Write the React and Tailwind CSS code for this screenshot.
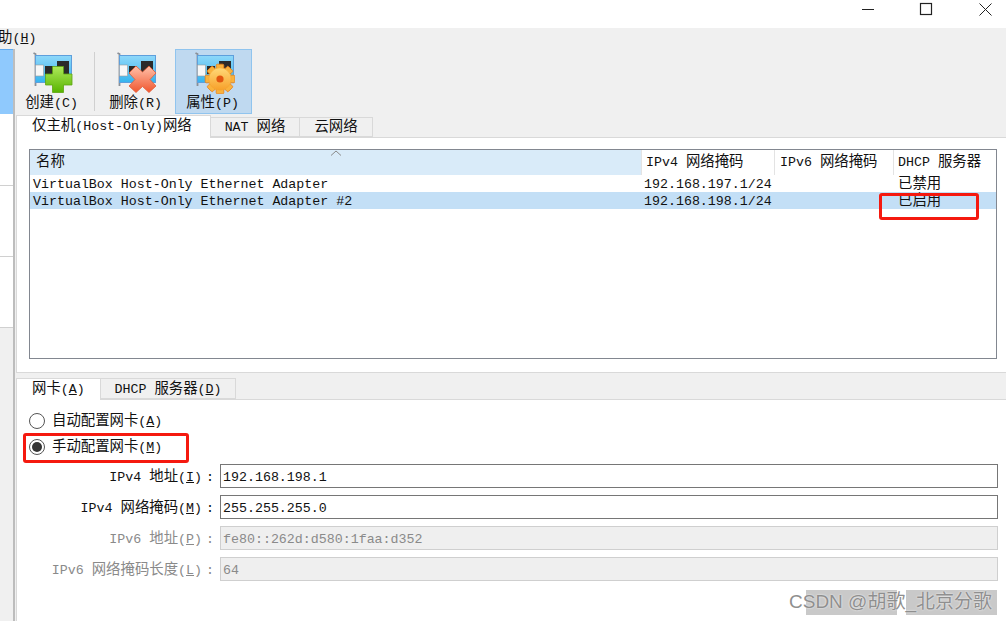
const T = ({ children }) =>
  children.split(/([\u4e00-\u9fff]+)/).map((part, i) =>
    /[\u4e00-\u9fff]/.test(part) ? (
      <span key={i} className="text-[14.4px]">{part}</span>
    ) : (
      part
    )
  );

const Card = ({ id }) => (
  <>
    <defs>
      <linearGradient id={id} x1="0" y1="0" x2="0" y2="1">
        <stop offset="0" stopColor="#8fd8fa" />
        <stop offset="1" stopColor="#35b4ee" />
      </linearGradient>
    </defs>
    <path d="M0.5 1 L2.5 2 V34" fill="none" stroke="#8a8f96" strokeWidth="1.8" />
    <rect x="2.5" y="3.5" width="36" height="27" fill={`url(#${id})`} stroke="#5e9fdc" strokeWidth="1" />
    <rect x="2.5" y="13" width="8" height="11" fill="#f7f7f7" stroke="#9a9a9a" strokeWidth="0.6" />
    <rect x="12" y="14" width="8" height="8" fill="#2b2b2b" />
    <rect x="24" y="9" width="12" height="13" fill="#2b2b2b" />
  </>
);

const PlusIcon = () => (
  <svg width="40" height="42" viewBox="0 0 40 42" className="block">
    <Card id="cardA" />
    <defs>
      <linearGradient id="plusG" x1="0" y1="0" x2="0" y2="1">
        <stop offset="0" stopColor="#aee95a" />
        <stop offset="1" stopColor="#58b400" />
      </linearGradient>
    </defs>
    <path d="M19.5 14.5 H30.5 V22 H39 V33 H30.5 V40.5 H19.5 V33 H12.5 V22 H19.5 Z" fill="url(#plusG)" stroke="#5ea512" strokeWidth="0.8" />
  </svg>
);

const CrossIcon = () => (
  <svg width="40" height="42" viewBox="0 0 40 42" className="block">
    <Card id="cardB" />
    <defs>
      <linearGradient id="crossG" x1="0" y1="0" x2="0" y2="1">
        <stop offset="0" stopColor="#ffc2ab" />
        <stop offset="1" stopColor="#f0562e" />
      </linearGradient>
    </defs>
    <path d="M19 14 L25.5 20 L32 14 L39 21 L33 27.5 L39 34 L32 40.5 L25.5 34.5 L19 40.5 L12 34 L18 27.5 L12 21 Z" fill="url(#crossG)" stroke="#e25a33" strokeWidth="0.8" />
  </svg>
);

const GearIcon = () => {
  const teeth = [0, 45, 90, 135, 180, 225, 270, 315];
  return (
    <svg width="40" height="42" viewBox="0 0 40 42" className="block">
      <Card id="cardC" />
      <defs>
        <linearGradient id="gearG" x1="0" y1="0" x2="0" y2="1">
          <stop offset="0" stopColor="#ffd978" />
          <stop offset="1" stopColor="#f7a02a" />
        </linearGradient>
      </defs>
      <g transform="translate(25 27)">
        {teeth.map((a) => (
          <rect key={a} x="-3.8" y="-14.8" width="7.6" height="8" rx="1.2" fill="#f9b23c" stroke="#e8801c" strokeWidth="0.8" transform={`rotate(${a})`} />
        ))}
        <circle r="11.2" fill="url(#gearG)" stroke="#f3a42f" strokeWidth="0.6" />
        <circle r="3.6" fill="#e2570f" />
      </g>
    </svg>
  );
};

const Tool = ({ icon, label, k, active }) => (
  <div className={`w-[77px] h-[65px] flex flex-col items-center ${active ? "bg-[#bfd9f0] border border-[#90c4ee]" : ""}`}>
    <div className={active ? "mt-[2px] ml-[3px]" : "mt-[3px]"}>{icon}</div>
    <div className="h-[19px] leading-[19px] -ml-[2px] whitespace-nowrap">
      <T>{label}</T>({k})
    </div>
  </div>
);

const Row = ({ label, k, value, disabled }) => (
  <div className="flex items-center gap-[6px] h-[24px]">
    <div className={`w-[197px] text-right whitespace-pre pt-[4px] ${disabled ? "text-[#8a8a8a]" : ""}`}>
      <T>{label}</T>(<u>{k}</u>)<span className="pl-[4px]">:</span>
    </div>
    <div className={`w-[778px] h-[24px] border pl-[2px] leading-[26px] ${disabled ? "border-[#cfcfcf] bg-[#efefef] text-[#8a8a8a]" : "border-[#767676] bg-white"}`}>
      {value}
    </div>
  </div>
);

const Radio = ({ checked, label, k }) => (
  <div className="flex items-center h-[26px] pl-[12px]">
    <div className="w-[16px] h-[16px] rounded-full border border-[#555] bg-white flex items-center justify-center">
      {checked && <div className="w-[10px] h-[10px] rounded-full bg-[#333]" />}
    </div>
    <span className="ml-[7px] pt-[2px] whitespace-nowrap">
      <T>{label}</T>(<u>{k}</u>)
    </span>
  </div>
);

const Cell = ({ w, className = "", children }) => (
  <div className={`shrink-0 whitespace-pre ${w} ${className}`}>{children}</div>
);

export default function App() {
  return (
    <div
      className="relative w-[1006px] h-[621px] overflow-hidden flex flex-col bg-[#f0f0f0] text-[13.3px] text-[#111]"
      style={{ fontFamily: '"Liberation Mono","Noto Sans CJK SC",monospace' }}
    >
      {/* title bar */}
      <div className="h-[28px] bg-white flex shrink-0 justify-end">
        <svg width="150" height="28" viewBox="0 0 150 28" className="block">
          <path d="M6 9.5 H18" stroke="#222" strokeWidth="1" />
          <rect x="64.5" y="3.5" width="11" height="11" fill="none" stroke="#222" strokeWidth="1.2" />
          <path d="M123.5 3.5 L135.5 15.5 M135.5 3.5 L123.5 15.5" stroke="#222" strokeWidth="1" />
        </svg>
      </div>
      {/* menu */}
      <div className="h-[21px] shrink-0 leading-[20px] -ml-[2px]">
        <T>助</T>(<u>H</u>)
      </div>

      <div className="flex flex-1 min-h-0">
        {/* left tree */}
        <div className="w-[15px] shrink-0 border-r-2 border-[#bdbdbd] flex flex-col">
          <div className="h-[65px] bg-[#8fc9fd] border-t border-[#5ea9ef]" />
          <div className="h-[72px] bg-white border-b border-[#d0d0d0]" />
          <div className="h-[71px] bg-white border-b border-[#d0d0d0]" />
          <div className="h-[71px] bg-white border-b border-[#d0d0d0]" />
        </div>

        <div className="flex-1 min-w-0 flex flex-col -ml-[2px]">
          {/* toolbar */}
          <div className="h-[65px] shrink-0 flex ml-[1px]">
            <Tool icon={<PlusIcon />} label="创建" k="C" />
            <div className="w-px h-[59px] mt-[3px] mx-[3px] bg-[#d0d0d0]" />
            <Tool icon={<CrossIcon />} label="删除" k="R" />
            <Tool icon={<GearIcon />} label="属性" k="P" active />
          </div>

          {/* top tabs */}
          <div className="h-[23px] shrink-0 flex items-end pl-[3px]">
            <div className="w-[195px] h-[23px] bg-white border border-b-0 border-[#d9d9d9] pl-[15px] leading-[21px] whitespace-nowrap relative z-10 -mb-px">
              <T>仅主机</T>(Host-Only)<T>网络</T>
            </div>
            <div className="w-[89px] h-[20px] border border-l-0 border-[#d9d9d9] text-center leading-[19px] whitespace-pre">NAT <T>网络</T></div>
            <div className="w-[73px] h-[20px] border border-l-0 border-[#d9d9d9] text-center leading-[19px]"><T>云网络</T></div>
          </div>

          {/* top panel */}
          <div className="h-[236px] shrink-0 ml-[3px] bg-white border-y border-l border-[#d9d9d9] pt-[11px] pl-[12px]">
            <div className="w-[968px] h-[210px] border border-[#828790]">
              <div className="flex h-[25px] leading-[24px]">
                <Cell w="w-[611px]" className="bg-[#d9ebf9] pl-[6px] relative">
                  <T>名称</T>
                  <svg width="12" height="6" viewBox="0 0 12 6" className="absolute left-[300px] top-0">
                    <path d="M1 5.5 L6 1 L11 5.5" fill="none" stroke="#8a8a8a" />
                  </svg>
                </Cell>
                <Cell w="w-[133px]" className="border-l border-[#e3e3e3] pl-[4px]">IPv4 <T>网络掩码</T></Cell>
                <Cell w="w-[119px]" className="border-l border-[#e3e3e3] pl-[5px]">IPv6 <T>网络掩码</T></Cell>
                <Cell w="flex-1" className="border-l border-[#e3e3e3] pl-[4px]">DHCP <T>服务器</T></Cell>
              </div>
              <div className="flex h-[17px] leading-[19px]">
                <Cell w="w-[611px]" className="pl-[3px]">VirtualBox Host-Only Ethernet Adapter</Cell>
                <Cell w="w-[252px]" className="pl-[3px]">192.168.197.1/24</Cell>
                <Cell w="flex-1" className="pl-[5px]"><T>已禁用</T></Cell>
              </div>
              <div className="flex h-[17px] leading-[19px] bg-[#c3dff6]">
                <Cell w="w-[611px]" className="pl-[3px]">VirtualBox Host-Only Ethernet Adapter #2</Cell>
                <Cell w="w-[252px]" className="pl-[3px]">192.168.198.1/24</Cell>
                <Cell w="flex-1" className="pl-[5px]"><T>已启用</T></Cell>
              </div>
            </div>
          </div>

          {/* bottom tabs */}
          <div className="h-[22px] mt-[4px] shrink-0 flex items-end pl-[3px]">
            <div className="w-[85px] h-[22px] bg-white border border-b-0 border-[#d9d9d9] pl-[15px] leading-[20px] relative z-10 -mb-px">
              <T>网卡</T>(<u>A</u>)
            </div>
            <div className="w-[135px] h-[21px] border border-l-0 border-[#d9d9d9] text-center leading-[21px] whitespace-pre">
              DHCP <T>服务器</T>(<u>D</u>)
            </div>
          </div>

          {/* bottom panel */}
          <div className="flex-1 ml-[3px] bg-white border-t border-l border-[#d9d9d9] pt-[8px]">
            <Radio label="自动配置网卡" k="A" />
            <Radio checked label="手动配置网卡" k="M" />
            <div className="mt-[4px] flex flex-col gap-[7px]">
              <Row label="IPv4 地址" k="I" value="192.168.198.1" />
              <Row label="IPv4 网络掩码" k="M" value="255.255.255.0" />
              <Row disabled label="IPv6 地址" k="P" value="fe80::262d:d580:1faa:d352" />
              <Row disabled label="IPv6 网络掩码长度" k="L" value="64" />
            </div>
          </div>
        </div>
      </div>

      {/* red annotations */}
      <div className="absolute left-[879px] top-[193px] w-[100px] h-[27px] border-[3px] border-[#f5190f] rounded-[3px]" />
      <div className="absolute left-[23px] top-[433px] w-[166px] h-[30px] border-[3px] border-[#f5190f] rounded-[3px]" />

      {/* watermark */}
      <div className="absolute left-[806px] top-[590px] w-[91px] h-[25px] bg-[#c9c9c9]" />
      <div className="absolute left-[906px] top-[590px] w-[91px] h-[25px] bg-[#c9c9c9]" />
      <div
        className="absolute left-[789px] top-[589px] text-[19px] leading-[26px] text-[#8f8f8f] whitespace-pre [text-shadow:0_0_2px_#fff]"
        style={{ fontFamily: '"Liberation Sans","Noto Sans CJK SC",sans-serif' }}
      >
        CSDN @胡歌_北京分歌
      </div>
    </div>
  );
}
